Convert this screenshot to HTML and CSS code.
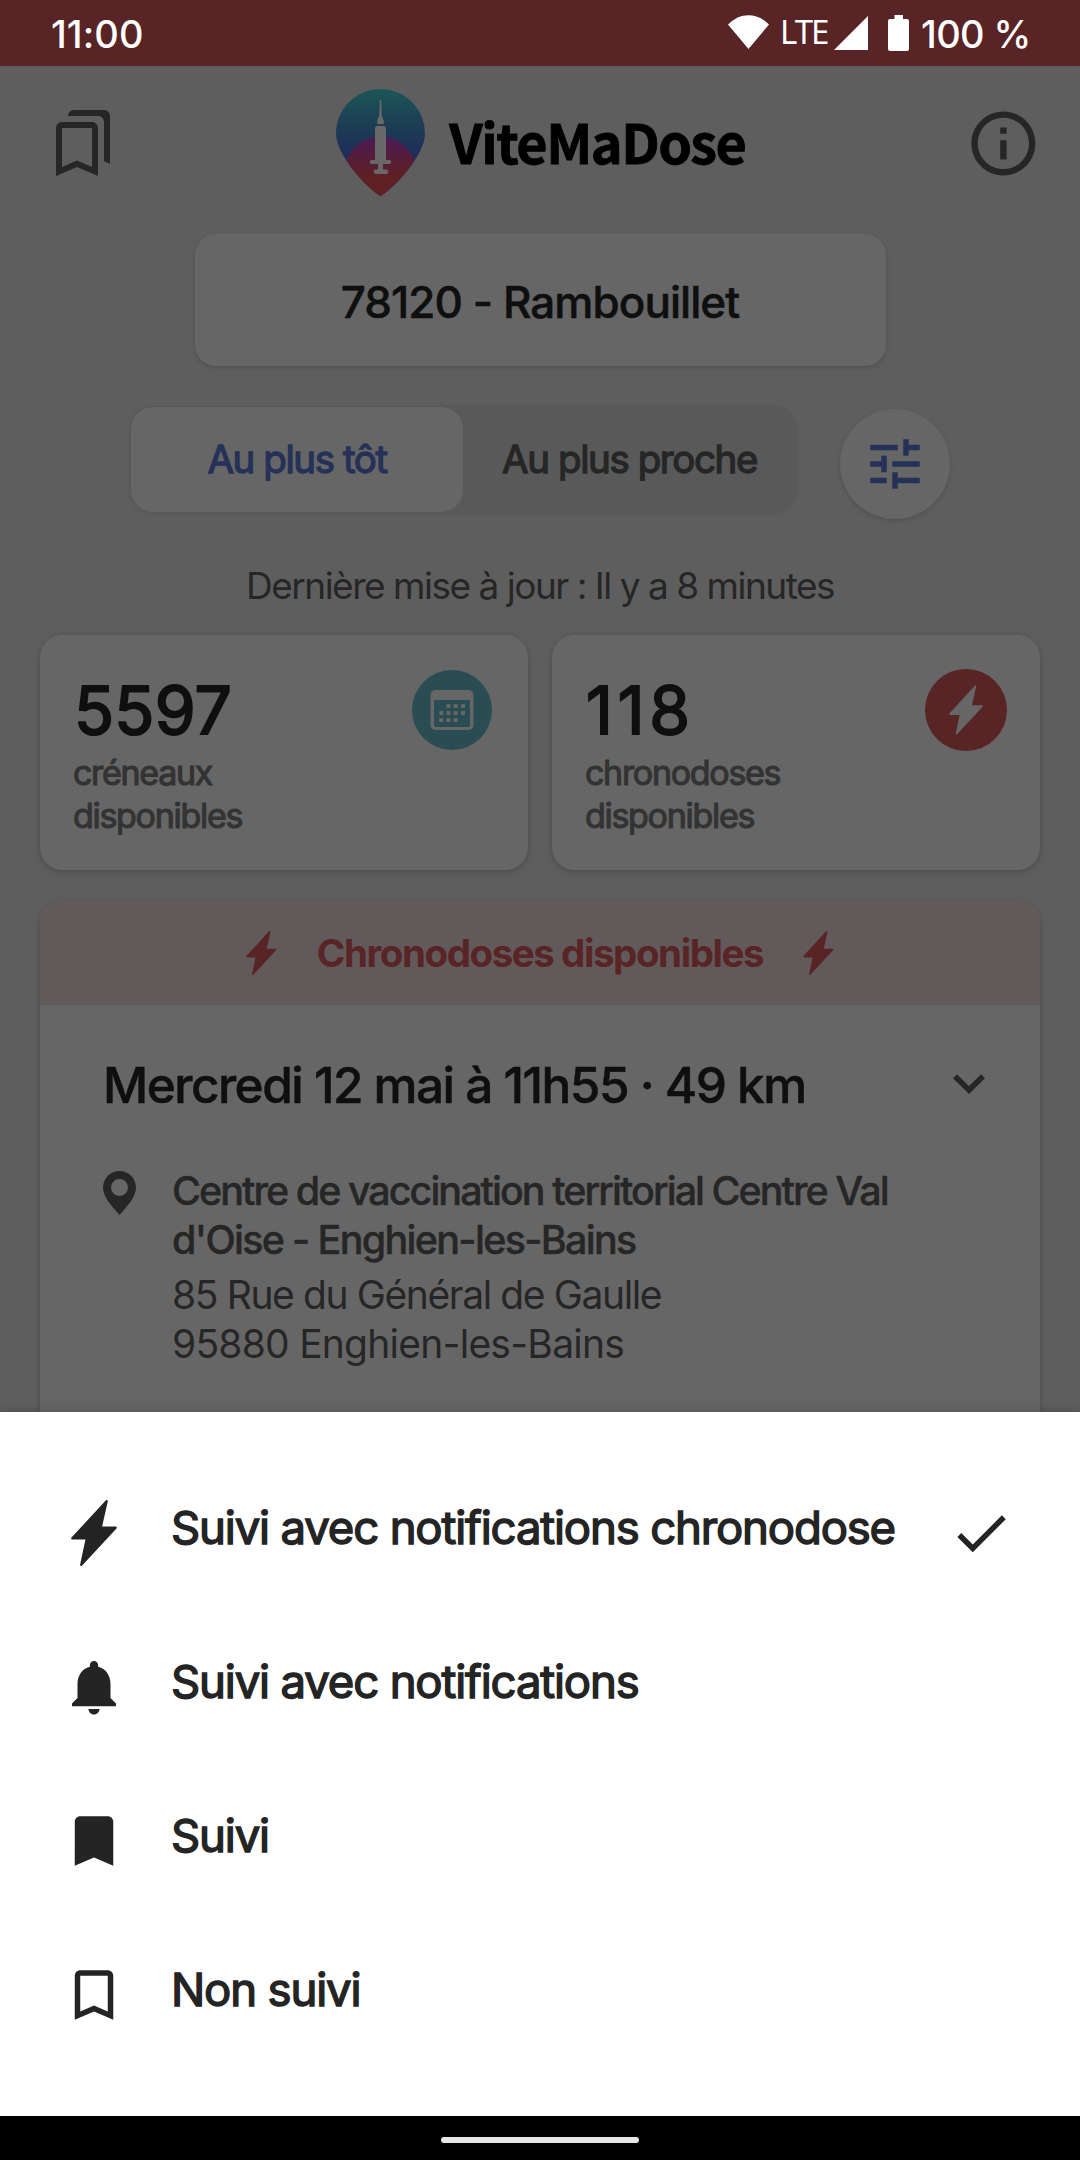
FILE: index.html
```html
<!DOCTYPE html>
<html lang="fr">
<head>
<meta charset="utf-8">
<title>ViteMaDose</title>
<link rel="stylesheet" href="styles.css">
</head>
<body>
<svg class="defs" width="0" height="0" aria-hidden="true">
  <symbol id="bolt" viewBox="0 0 46 66">
    <path d="M35.6 1.2 29.6 27.8H44.6L10.3 64.8 15.9 38.4H1.4Z" fill="currentColor" stroke="currentColor" stroke-width="2.4" stroke-linejoin="round"/>
  </symbol>
</svg>
<div class="phone">
  <header class="status">
    <span class="clock">11:00</span>
    <div class="status-icons">
      <svg class="wifi" viewBox="0 0 41 34"><path d="M0 9.5C12-3 29-3 41 9.500L20.500 34Z" fill="#fff"/></svg>
      <span class="lte">LTE</span>
      <svg class="signal" viewBox="0 0 34 34"><path d="M34 0V34H0Z" fill="#fff"/></svg>
      <svg class="battery" viewBox="0 0 21 36"><path d="M6.500 0h8.500v4h4q2 0 2 2v28q0 2-2 2H2q-2 0-2-2V6q0-2 2-2h4.500z" fill="#fff"/></svg>
      <span class="percent">100 %</span>
    </div>
  </header>

  <main class="page">
    <div class="topbar">
      <svg class="saved" viewBox="0 0 24 24"><path fill="currentColor" d="M15 7v12.970l-4.210-1.810-.79-.34-.79.34L5 19.970V7h10m4-6H8.990C7.890 1 7 1.900 7 3h10c1.100 0 2 .9 2 2v13l2 1V3c0-1.100-.9-2-2-2zm-4 4H5c-1.100 0-2 .9-2 2v16l7-3 7 3V7c0-1.100-.9-2-2-2z"/></svg>
      <div class="brand">
        <svg class="logo" viewBox="0 0 89 107">
          <defs>
            <linearGradient id="sky" x1="0" y1="0" x2="0" y2="72" gradientUnits="userSpaceOnUse"><stop offset="0" stop-color="#1b5656"/><stop offset=".5" stop-color="#1c3e54"/><stop offset="1" stop-color="#20295c"/></linearGradient>
            <linearGradient id="dawn" x1="0" y1="47" x2="0" y2="86" gradientUnits="userSpaceOnUse"><stop offset="0" stop-color="#4a1a58"/><stop offset=".5" stop-color="#541d3c"/><stop offset="1" stop-color="#5e1f25"/></linearGradient>
            <clipPath id="pin"><path d="M44.500 107C33 101 0 67 0 44.500A44.500 44.500 0 0 1 89 44.500C89 67 56 101 44.500 107Z"/></clipPath>
          </defs>
          <g clip-path="url(#pin)">
            <rect width="89" height="107" fill="url(#sky)"/>
            <path d="M0 107V86L10 72C17 56 30 47.500 44.500 47.500S72 56 79 72L89 86V107Z" fill="url(#dawn)"/>
          </g>
          <g fill="#686868">
            <path d="M43.800 11h1.400l.6 15.500 2 5.500v3h-6.600v-3l2-5.500z"/>
            <path d="M41.500 37h6q2.500 0 2.500 2.500V71h3.300a1.900 1.900 0 0 1 0 4H47v5.500h3a2.300 2.300 0 0 1 0 4.600H40a2.300 2.300 0 0 1 0-4.600h2V75h-6.300a1.900 1.900 0 0 1 0-4H39V39.500Q39 37 41.500 37z"/>
          </g>
        </svg>
        <h1 class="brand-name">ViteMaDose</h1>
      </div>
      <svg class="info" viewBox="0 0 24 24"><path fill="currentColor" d="M11 7h2v2h-2zm0 4h2v6h-2zm1-9C6.480 2 2 6.480 2 12s4.480 10 10 10 10-4.480 10-10S17.520 2 12 2zm0 18c-4.410 0-8-3.590-8-8s3.590-8 8-8 8 3.590 8 8-3.590 8-8 8z"/></svg>
    </div>

    <div class="search">78120 - Rambouillet</div>

    <div class="sort">
      <div class="segments">
        <div class="segment active">Au plus tôt</div>
        <div class="segment">Au plus proche</div>
      </div>
      <div class="filter">
        <svg viewBox="0 0 24 24"><path fill="currentColor" d="M3 17v2h6v-2H3zM3 5v2h10V5H3zm10 16v-2h8v-2h-8v-2h-2v6h2zM7 9v2H3v2h4v2h2V9H7zm14 4v-2H11v2h10zm-6-4h2V7h4V5h-4V3h-2v6z"/></svg>
      </div>
    </div>

    <p class="updated">Dernière mise à jour : Il y a 8 minutes</p>

    <div class="stats">
      <div class="stat">
        <div class="stat-text">
          <div class="stat-number">5597</div>
          <div class="stat-label">créneaux<br>disponibles</div>
        </div>
        <svg class="stat-icon" viewBox="0 0 82 82">
          <circle cx="41" cy="41" r="40" fill="#294d53"/>
          <rect x="19.500" y="21" width="43" height="40" rx="5" fill="#666"/>
          <rect x="23" y="31" width="36" height="27" rx="2" fill="#294d53"/>
          <path fill="#666" d="M35.500 35h4v4h-4zM42.700 35h4v4h-4zM50 35h4v4h-4zM28.300 42h4v4h-4zM35.500 42h4v4h-4zM42.700 42h4v4h-4zM50 42h4v4h-4zM28.300 49h4v4h-4zM35.500 49h4v4h-4zM42.700 49h4v4h-4z"/>
        </svg>
      </div>
      <div class="stat">
        <div class="stat-text">
          <div class="stat-number ones">118</div>
          <div class="stat-label">chronodoses<br>disponibles</div>
        </div>
        <div class="stat-icon chrono"><svg class="bolt-md"><use href="#bolt"/></svg></div>
      </div>
    </div>

    <section class="center-card">
      <div class="banner">
        <svg class="bolt-sm"><use href="#bolt"/></svg>
        <span>Chronodoses disponibles</span>
        <svg class="bolt-sm"><use href="#bolt"/></svg>
      </div>
      <div class="slot">
        <h2>Mercredi 12 mai à 11h55 · 49 km</h2>
        <svg class="chevron" viewBox="0 0 32 20"><path d="M2 2.200 16 16 30 2.200" fill="none" stroke="currentColor" stroke-width="5.600"/></svg>
      </div>
      <div class="place">
        <svg class="pin" viewBox="0 0 33 44"><path fill="currentColor" fill-rule="evenodd" d="M16.500 44C9 35.500 0 26 0 16.500a16.500 16.500 0 0 1 33 0C33 26 24 35.500 16.500 44ZM16.500 8a8.500 8.500 0 1 0 0 17 8.500 8.500 0 0 0 0-17Z"/></svg>
        <div>
          <p class="name"><span class="name-a">Centre de vaccination territorial Centre Val</span><br><span class="name-b">d'Oise - Enghien-les-Bains</span></p>
          <p class="address"><span class="addr-a">85 Rue du Général de Gaulle</span><br><span class="addr-b">95880 Enghien-les-Bains</span></p>
        </div>
      </div>
    </section>
  </main>

  <div class="sheet">
    <div class="option">
      <span class="glyph"><svg class="bolt-lg"><use href="#bolt"/></svg></span>
      <span class="label">Suivi avec notifications chronodose</span>
      <svg class="check" viewBox="0 0 24 24"><path fill="currentColor" d="M9 16.170 4.830 12l-1.420 1.410L9 19 21 7l-1.410-1.410z"/></svg>
    </div>
    <div class="option">
      <span class="glyph"><svg class="icon" viewBox="0 0 24 24"><path fill="currentColor" d="M12 22c1.100 0 2-.9 2-2h-4c0 1.100.89 2 2 2zm6-6v-5c0-3.070-1.640-5.640-4.500-6.320V4c0-.83-.67-1.500-1.500-1.500s-1.500.67-1.500 1.500v.68C7.630 5.360 6 7.920 6 11v5l-2 2v1h16v-1l-2-2z"/></svg></span>
      <span class="label">Suivi avec notifications</span>
    </div>
    <div class="option">
      <span class="glyph"><svg class="icon" viewBox="0 0 24 24"><path fill="currentColor" d="M17 3H7c-1.100 0-1.990.9-1.990 2L5 21l7-3 7 3V5c0-1.100-.9-2-2-2z"/></svg></span>
      <span class="label">Suivi</span>
    </div>
    <div class="option">
      <span class="glyph"><svg class="icon" viewBox="0 0 24 24"><path fill="currentColor" d="M17 3H7c-1.100 0-1.990.9-1.990 2L5 21l7-3 7 3V5c0-1.100-.9-2-2-2zm0 15-5-2.180L7 18V5h10v13z"/></svg></span>
      <span class="label">Non suivi</span>
    </div>
  </div>

  <footer class="gesture"><div class="handle"></div></footer>
</div>
</body>
</html>
```
FILE: styles.css
```css
* { box-sizing: border-box; margin: 0; }
svg { display: block; flex: none; }
.defs { position: absolute; }

body {
  font-family: Inter, sans-serif;
  font-weight: 400;
  color: #262626;
  background: #000;
}

.phone {
  width: 1080px;
  height: 2160px;
  display: grid;
  grid-template-rows: 66px 1346px 704px 44px;
  overflow: hidden;
}

/* Status bar */
.status {
  background: #582426;
  color: #fff;
  display: flex;
  justify-content: space-between;
  align-items: flex-start;
  padding: 15px 50px 0 51px;
  white-space: nowrap;
}
.clock, .percent { font-size: 38px; font-weight: 500; line-height: 39px; letter-spacing: .1px; }
.status-icons { display: flex; align-items: flex-start; }
.wifi { width: 41px; height: 34px; }
.lte { font-family: "Noto Sans", sans-serif; font-size: 33px; line-height: 34px; letter-spacing: -2px; margin-left: 11px; width: 54px; }
.signal { width: 34px; height: 34px; margin-top: 1px; }
.battery { width: 21px; height: 36px; margin: 0 12px 0 20px; }
.percent { width: 109px; letter-spacing: -.6px; }

/* Dimmed page */
.page {
  background: #5e5e5e;
  display: flex;
  flex-direction: column;
  overflow: hidden;
}

.topbar {
  flex: none;
  display: flex;
  align-items: flex-start;
  justify-content: space-between;
  padding: 22px 38.600px 0 47px;
  height: 168px;
}
.saved { width: 72px; height: 72px; margin-top: 19px; }
.info { width: 76.800px; height: 76.800px; margin-top: 16.600px; }
.brand { display: flex; width: 410px; gap: 24px; margin-right: 1px; }
.logo { width: 89px; height: 107px; margin-top: .5px; }
.brand-name {
  font-family: "Noto Sans CJK JP", sans-serif;
  font-size: 54px;
  font-weight: 700;
  line-height: 60px;
  letter-spacing: -1.500px;
  color: #000;
  margin-top: 22.500px;
  -webkit-text-stroke: .8px currentColor;
}

.search {
  flex: none;
  align-self: center;
  width: 691px;
  height: 132px;
  border-radius: 21px;
  background: #666;
  box-shadow: 0 2px 5px rgba(0, 0, 0, .14);
  color: #0f0f0f;
  font-size: 44px;
  font-weight: 500;
  line-height: 136px;
  letter-spacing: -.94px;
  text-align: center;
  -webkit-text-stroke: .5px currentColor;
}

.sort {
  flex: none;
  display: flex;
  justify-content: center;
  gap: 44px;
  margin: 40px 0 0 1px;
}
.segments {
  width: 665px;
  height: 106px;
  display: grid;
  grid-template-columns: 332px 333px;
  border-radius: 22px;
  background: #595959;
  box-shadow: 0 1px 4px rgba(0, 0, 0, .1);
}
.segment {
  border-radius: 22px;
  margin: 1px 0;
  font-size: 38.500px;
  line-height: 105px;
  letter-spacing: -1.420px;
  text-align: center;
  -webkit-text-stroke: 1.300px currentColor;
}
.segment.active { background: #666; color: #263158; }
.filter {
  width: 110px;
  height: 110px;
  margin-top: 3px;
  border-radius: 50%;
  background: #666;
  box-shadow: 0 2px 5px rgba(0, 0, 0, .14);
  color: #263158;
  display: grid;
  place-items: center;
}
.filter svg { width: 66px; height: 66px; }

.updated {
  font-size: 37px;
  line-height: 50px;
  letter-spacing: -1.480px;
  text-align: center;
  margin-top: 42px;
}

.stats {
  flex: none;
  display: grid;
  grid-template-columns: 1fr 1fr;
  gap: 24px;
  margin: 24px 40px 0;
}
.stat {
  height: 235px;
  border-radius: 22px;
  background: #666;
  box-shadow: 0 2px 6px rgba(0, 0, 0, .2);
  display: flex;
  justify-content: space-between;
  padding: 34px 33px 0 33px;
}
.stat-number {
  font-size: 66px;
  line-height: 82px;
  letter-spacing: .2px;
  padding-left: 1px;
  color: #0f0f0f;
  -webkit-text-stroke: 2px currentColor;
}
.stat-number.ones { letter-spacing: 4.800px; }
.stat-label {
  font-size: 34px;
  line-height: 43px;
  letter-spacing: -1.300px;
  color: #333;
  -webkit-text-stroke: 1.100px currentColor;
}
.stat-icon { width: 82px; height: 82px; }
.stat:first-child .stat-icon { margin-right: 2px; }
.chrono {
  border-radius: 50%;
  background: #582426;
  color: #666;
  display: grid;
  place-items: center;
}
.bolt-md { width: 34px; height: 50px; }

.center-card {
  flex: none;
  width: 1000px;
  height: 600px;
  margin: 30px 40px 0;
  border-radius: 22px;
  background: #666;
  box-shadow: 0 2px 6px rgba(0, 0, 0, .2);
  overflow: hidden;
}
.banner {
  height: 105px;
  background: #625a5a;
  color: #582426;
  display: flex;
  justify-content: center;
  align-items: center;
  gap: 40px;
  font-size: 38.500px;
  font-weight: 700;
  letter-spacing: -1.430px;
}
.bolt-sm { width: 30.600px; height: 44px; }
.slot {
  display: flex;
  justify-content: space-between;
  align-items: center;
  padding: 0 55px 0 63px;
  height: 160px;
  color: #262626;
}
.slot h2 {
  font-size: 49.500px;
  font-weight: 500;
  line-height: 60px;
  letter-spacing: -1.520px;
  color: #0f0f0f;
  -webkit-text-stroke: .5px currentColor;
}
.chevron { width: 32px; height: 20px; margin-bottom: 3px; }
.place { display: flex; gap: 36px; padding: 2px 0 0 63px; white-space: nowrap; }
.pin { width: 33px; height: 44px; margin-top: 4px; }
.name { font-size: 39.500px; font-weight: 500; line-height: 49px; -webkit-text-stroke: .4px currentColor; }
.name-a { letter-spacing: -1.990px; }
.name-b { letter-spacing: -1.700px; }
.address { font-size: 39px; line-height: 49px; margin-top: 5px; }
.addr-a { letter-spacing: -1.380px; }
.addr-b { letter-spacing: -.760px; }

/* Follow options */
.sheet {
  position: relative;
  background: #fff;
  box-shadow: 0 0 12px rgba(0, 0, 0, .2);
  color: #242424;
  padding: 44px 0;
}
.option {
  height: 154px;
  display: flex;
  align-items: center;
  padding: 0 66px 0 61px;
}
.glyph { width: 66px; height: 66px; display: grid; place-items: center; }
.icon { width: 66px; height: 66px; }
.bolt-lg { width: 46px; height: 66px; }
.label {
  margin: 0 auto 11px 44px;
  font-size: 45.500px;
  line-height: 60px;
  letter-spacing: -1.160px;
  white-space: nowrap;
  -webkit-text-stroke: 1.400px currentColor;
}
.check { width: 66px; height: 66px; }

/* Gesture bar */
.gesture { background: #000; display: flex; justify-content: center; }
.handle { width: 198px; height: 6px; margin-top: 21px; border-radius: 3px; background: #e8e8e8; }
```
